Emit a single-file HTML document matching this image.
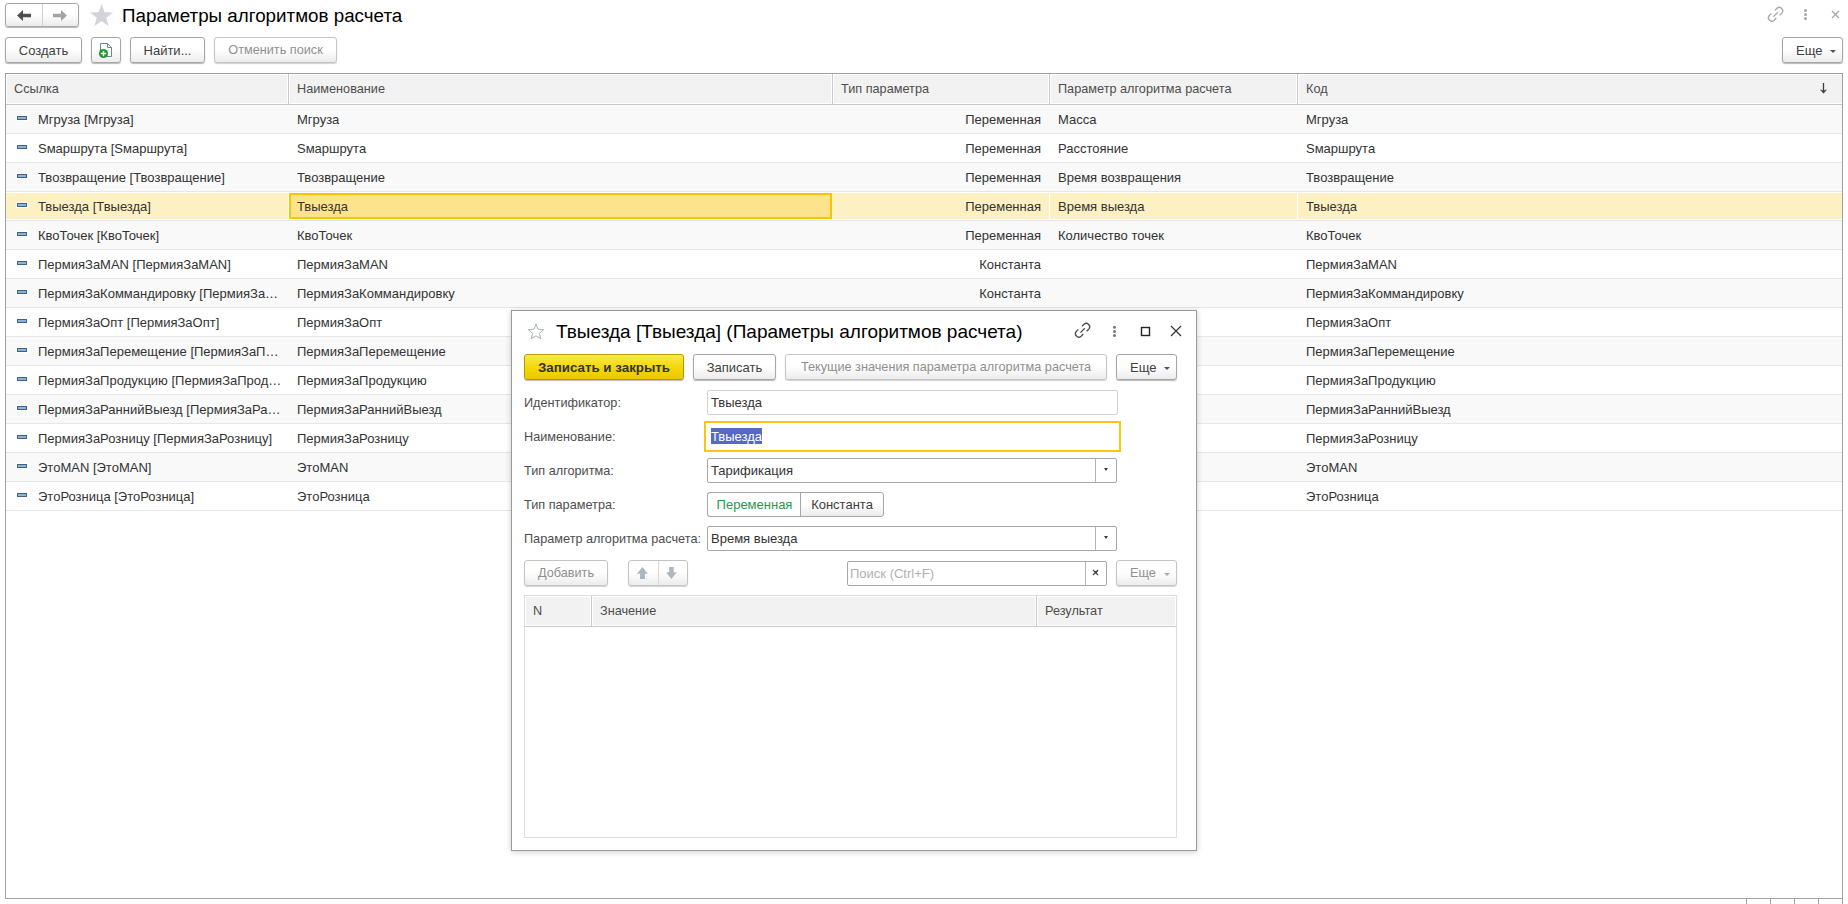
<!DOCTYPE html>
<html><head><meta charset="utf-8">
<style>
*{box-sizing:border-box;margin:0;padding:0}
html,body{width:1848px;height:904px;overflow:hidden;background:#fff}
body{font-family:"Liberation Sans",sans-serif;font-size:13px;color:#333;position:relative}
.a{position:absolute}
svg{position:absolute;overflow:visible}
.btn{position:absolute;border:1px solid #a6a6a6;border-radius:3px;background:linear-gradient(#fff 0%,#fff 45%,#ececec 100%);box-shadow:0 1px 1px rgba(0,0,0,.28);color:#404040;font-size:13px;text-align:center;white-space:nowrap;line-height:25px}
.btn.dis{color:#8f8f8f;border-color:#c4c4c4;box-shadow:0 1px 1px rgba(0,0,0,.18);font-size:12.7px}
.title{position:absolute;font-size:19px;color:#000;white-space:nowrap;line-height:22px}
/* main table */
.tbl{position:absolute;left:5px;top:73px;width:1838px;height:826px;border:1px solid #a0a0a0;background:#fff;overflow:hidden}
.hdr{position:absolute;left:0;top:0;width:1836px;height:31px;background:#fff;border-bottom:1px solid #c8c8c8}
.hb{position:absolute;top:1px;height:28px;background:#f2f2f2}
.hc{position:absolute;top:0;height:30px;line-height:31px;color:#4d4d4d;white-space:nowrap;font-size:12.7px}
.hsep{position:absolute;top:0;width:1px;height:30px;background:#cbcbcb}
.row{position:absolute;left:0;width:1836px;height:29px;border-bottom:1px solid #e6e6e6}
.row.g{background:#f9f9f9}
.row.sel{background:#fff;}
.row.sel .bg{position:absolute;left:0;right:0;top:1px;bottom:1px;background:#fdf0c2}
.c{position:absolute;top:1px;height:27px;line-height:28px;white-space:nowrap;overflow:hidden;text-overflow:ellipsis;color:#333}
.ico{position:absolute;left:11px;top:11px;width:10px;height:4px;background:#88b4dc;border:1px solid #41617f;box-shadow:0 0 0 1px #fff}
.selc{position:absolute;left:283px;top:1px;width:543px;height:26px;background:#fde48c;border:2px solid #f7c600}
.vsep{position:absolute;top:1px;width:1px;height:26px;background:#fff}
/* dialog */
.dlg{position:absolute;left:511px;top:310px;width:686px;height:541px;background:#fff;border:1px solid #9a9a9a;box-shadow:0 1px 6px rgba(0,0,0,.2)}
.lbl{position:absolute;color:#4d4d4d;white-space:nowrap;line-height:16px;font-size:12.7px}
.inp{position:absolute;border:1px solid #d2d2d2;border-radius:2px;background:#fff;color:#333;white-space:nowrap;line-height:24px;padding-left:3px}
.inp.dd{border-color:#a8a8a8}
.ddb{position:absolute;top:0;right:0;width:21px;height:100%;border-left:1px solid #b4b4b4}
.ddb:after{content:"";position:absolute;left:7.5px;top:9px;border-left:2.5px solid transparent;border-right:2.5px solid transparent;border-top:3px solid #3a3a3a}
.arr{position:absolute;border-left:3px solid transparent;border-right:3px solid transparent;border-top:3px solid #555}
</style></head>
<body>
<!-- top nav -->
<div class="btn" style="left:5px;top:3px;width:74px;height:24px"></div>
<div class="a" style="left:42px;top:4px;width:1px;height:22px;background:#d0d0d0"></div>
<svg style="left:0;top:0" width="1" height="1"><path d="M17 15.5 L23 10 L23 13.8 L31 13.8 L31 17.2 L23 17.2 L23 21 Z" fill="#4f4f4f"/><path d="M67 15.5 L61 10 L61 13.8 L53 13.8 L53 17.2 L61 17.2 L61 21 Z" fill="#a3a3a3"/>
<path d="M101.50 4.10 L104.44 12.15 L113.01 12.46 L106.26 17.75 L108.61 25.99 L101.50 21.20 L94.39 25.99 L96.74 17.75 L89.99 12.46 L98.56 12.15 Z" fill="#d1d4d8"/></svg>
<div class="title" style="left:122px;top:5px;font-size:18.8px">Параметры алгоритмов расчета</div>
<svg style="left:0;top:0" width="1" height="1">
 <g fill="none" stroke="#a6a6a6" stroke-width="1.3" transform="translate(693,-316)"><path d="M1078.3 329.4 L1076.3 331.4 A3.4 3.4 0 0 0 1081.1 336.2 L1083.3 334"/><path d="M1081.9 326.4 L1084 324.3 A3.4 3.4 0 0 1 1088.8 329.1 L1086.6 331.3"/><path d="M1080.4 332.6 L1084.8 328.2"/></g>
 <g fill="#a6a6a6"><circle cx="1805.5" cy="10.4" r="1.5"/><circle cx="1805.5" cy="14.5" r="1.5"/><circle cx="1805.5" cy="18.6" r="1.5"/></g>
 <g stroke="#a6a6a6" stroke-width="1.2"><path d="M1832 11 L1839 18 M1839 11 L1832 18"/></g>
</svg>
<!-- toolbar -->
<div class="btn" style="left:5px;top:37px;width:77px;height:26px">Создать</div>
<div class="btn" style="left:91px;top:37px;width:30px;height:26px"></div>
<svg style="left:0;top:0" width="1" height="1">
 <path d="M100.5 43.5 H107.5 L111.5 47.5 V56.5 H100.5 Z" fill="#fff" stroke="#70839a" stroke-width="1" stroke-linejoin="miter"/>
 <path d="M107.5 43.5 V47.5 H111.5" fill="none" stroke="#70839a" stroke-width="1"/>
 <circle cx="103.5" cy="53.5" r="4.5" fill="#139a26"/>
 <path d="M103.5 50.8 V56.2 M100.8 53.5 H106.2" stroke="#fff" stroke-width="1.5"/>
</svg>
<div class="btn" style="left:130px;top:37px;width:75px;height:26px">Найти...</div>
<div class="btn dis" style="left:214px;top:37px;width:123px;height:26px">Отменить поиск</div>
<div class="btn" style="left:1782px;top:37px;width:61px;height:26px;text-align:left;padding-left:13px;line-height:25px">Еще</div>
<div class="arr" style="left:1830px;top:50px"></div>

<div class="tbl">
 <div class="hdr">
  <div class="hb" style="left:1px;width:280px"></div>
  <div class="hb" style="left:284px;width:541px"></div>
  <div class="hb" style="left:828px;width:214px"></div>
  <div class="hb" style="left:1045px;width:245px"></div>
  <div class="hb" style="left:1293px;width:543px"></div>
  <div class="hsep" style="left:282px"></div>
  <div class="hsep" style="left:826px"></div>
  <div class="hsep" style="left:1043px"></div>
  <div class="hsep" style="left:1291px"></div>
  <div class="hc" style="left:8px">Ссылка</div>
  <div class="hc" style="left:291px">Наименование</div>
  <div class="hc" style="left:835px">Тип параметра</div>
  <div class="hc" style="left:1052px">Параметр алгоритма расчета</div>
  <div class="hc" style="left:1300px">Код</div>
  <svg style="left:0;top:0" width="1" height="1"><path d="M1817.5 9 V17" stroke="#3c3c3c" stroke-width="1.3"/><path d="M1814.6 15.8 L1817.5 17 L1820.4 15.8 L1817.5 19.3 Z" fill="#3c3c3c" stroke="#3c3c3c" stroke-width="0.6" stroke-linejoin="round"/></svg>
 </div>
<div class="row g" style="top:31px"><div class="ico"></div><div class="c" style="left:32px;width:246px">Мгруза [Мгруза]</div><div class="c" style="left:291px;width:530px">Мгруза</div><div class="c" style="left:834px;width:201px;text-align:right">Переменная</div><div class="c" style="left:1052px;width:240px">Масса</div><div class="c" style="left:1300px;width:530px">Мгруза</div></div>
<div class="row" style="top:60px"><div class="ico"></div><div class="c" style="left:32px;width:246px">Sмаршрута [Sмаршрута]</div><div class="c" style="left:291px;width:530px">Sмаршрута</div><div class="c" style="left:834px;width:201px;text-align:right">Переменная</div><div class="c" style="left:1052px;width:240px">Расстояние</div><div class="c" style="left:1300px;width:530px">Sмаршрута</div></div>
<div class="row g" style="top:89px"><div class="ico"></div><div class="c" style="left:32px;width:246px">Твозвращение [Твозвращение]</div><div class="c" style="left:291px;width:530px">Твозвращение</div><div class="c" style="left:834px;width:201px;text-align:right">Переменная</div><div class="c" style="left:1052px;width:240px">Время возвращения</div><div class="c" style="left:1300px;width:530px">Твозвращение</div></div>
<div class="row sel" style="top:118px"><div class="bg"></div><div class="vsep" style="left:282px"></div><div class="vsep" style="left:1043px"></div><div class="vsep" style="left:1291px"></div><div class="ico"></div><div class="c" style="left:32px;width:246px">Твыезда [Твыезда]</div><div class="selc"></div><div class="c" style="left:291px;width:530px">Твыезда</div><div class="c" style="left:834px;width:201px;text-align:right">Переменная</div><div class="c" style="left:1052px;width:240px">Время выезда</div><div class="c" style="left:1300px;width:530px">Твыезда</div></div>
<div class="row g" style="top:147px"><div class="ico"></div><div class="c" style="left:32px;width:246px">КвоТочек [КвоТочек]</div><div class="c" style="left:291px;width:530px">КвоТочек</div><div class="c" style="left:834px;width:201px;text-align:right">Переменная</div><div class="c" style="left:1052px;width:240px">Количество точек</div><div class="c" style="left:1300px;width:530px">КвоТочек</div></div>
<div class="row" style="top:176px"><div class="ico"></div><div class="c" style="left:32px;width:246px">ПермияЗаMAN [ПермияЗаMAN]</div><div class="c" style="left:291px;width:530px">ПермияЗаMAN</div><div class="c" style="left:834px;width:201px;text-align:right">Константа</div><div class="c" style="left:1052px;width:240px"></div><div class="c" style="left:1300px;width:530px">ПермияЗаMAN</div></div>
<div class="row g" style="top:205px"><div class="ico"></div><div class="c" style="left:32px;width:246px">ПермияЗаКоммандировку [ПермияЗаКоммандировку]</div><div class="c" style="left:291px;width:530px">ПермияЗаКоммандировку</div><div class="c" style="left:834px;width:201px;text-align:right">Константа</div><div class="c" style="left:1052px;width:240px"></div><div class="c" style="left:1300px;width:530px">ПермияЗаКоммандировку</div></div>
<div class="row" style="top:234px"><div class="ico"></div><div class="c" style="left:32px;width:246px">ПермияЗаОпт [ПермияЗаОпт]</div><div class="c" style="left:291px;width:530px">ПермияЗаОпт</div><div class="c" style="left:834px;width:201px;text-align:right">Константа</div><div class="c" style="left:1052px;width:240px"></div><div class="c" style="left:1300px;width:530px">ПермияЗаОпт</div></div>
<div class="row g" style="top:263px"><div class="ico"></div><div class="c" style="left:32px;width:246px">ПермияЗаПеремещение [ПермияЗаПеремещение]</div><div class="c" style="left:291px;width:530px">ПермияЗаПеремещение</div><div class="c" style="left:834px;width:201px;text-align:right">Константа</div><div class="c" style="left:1052px;width:240px"></div><div class="c" style="left:1300px;width:530px">ПермияЗаПеремещение</div></div>
<div class="row" style="top:292px"><div class="ico"></div><div class="c" style="left:32px;width:246px">ПермияЗаПродукцию [ПермияЗаПродукцию]</div><div class="c" style="left:291px;width:530px">ПермияЗаПродукцию</div><div class="c" style="left:834px;width:201px;text-align:right">Константа</div><div class="c" style="left:1052px;width:240px"></div><div class="c" style="left:1300px;width:530px">ПермияЗаПродукцию</div></div>
<div class="row g" style="top:321px"><div class="ico"></div><div class="c" style="left:32px;width:246px">ПермияЗаРаннийВыезд [ПермияЗаРаннийВыезд]</div><div class="c" style="left:291px;width:530px">ПермияЗаРаннийВыезд</div><div class="c" style="left:834px;width:201px;text-align:right">Константа</div><div class="c" style="left:1052px;width:240px"></div><div class="c" style="left:1300px;width:530px">ПермияЗаРаннийВыезд</div></div>
<div class="row" style="top:350px"><div class="ico"></div><div class="c" style="left:32px;width:246px">ПермияЗаРозницу [ПермияЗаРозницу]</div><div class="c" style="left:291px;width:530px">ПермияЗаРозницу</div><div class="c" style="left:834px;width:201px;text-align:right">Константа</div><div class="c" style="left:1052px;width:240px"></div><div class="c" style="left:1300px;width:530px">ПермияЗаРозницу</div></div>
<div class="row g" style="top:379px"><div class="ico"></div><div class="c" style="left:32px;width:246px">ЭтоMAN [ЭтоMAN]</div><div class="c" style="left:291px;width:530px">ЭтоMAN</div><div class="c" style="left:834px;width:201px;text-align:right">Константа</div><div class="c" style="left:1052px;width:240px"></div><div class="c" style="left:1300px;width:530px">ЭтоMAN</div></div>
<div class="row" style="top:408px"><div class="ico"></div><div class="c" style="left:32px;width:246px">ЭтоРозница [ЭтоРозница]</div><div class="c" style="left:291px;width:530px">ЭтоРозница</div><div class="c" style="left:834px;width:201px;text-align:right">Константа</div><div class="c" style="left:1052px;width:240px"></div><div class="c" style="left:1300px;width:530px">ЭтоРозница</div></div>
</div>
<!-- bottom scroll buttons -->
<div class="a" style="left:1746px;top:898px;width:97px;height:10px;border:1px solid #a0a0a0;background:#fff"></div>
<div class="a" style="left:1770px;top:898px;width:1px;height:10px;background:#a0a0a0"></div>
<div class="a" style="left:1794px;top:898px;width:1px;height:10px;background:#a0a0a0"></div>
<div class="a" style="left:1818px;top:898px;width:1px;height:10px;background:#a0a0a0"></div>

<!-- dialog -->
<div class="dlg">
</div>
<svg style="left:0;top:0" width="1" height="1">
 <path d="M536.00 324.10 L538.12 329.29 L543.70 329.70 L539.42 333.31 L540.76 338.75 L536.00 335.80 L531.24 338.75 L532.58 333.31 L528.30 329.70 L533.88 329.29 Z" fill="none" stroke="#a9adb2" stroke-width="1" stroke-linejoin="round"/>
</svg>
<div class="title" style="left:556px;top:321px">Твыезда [Твыезда] (Параметры алгоритмов расчета)</div>
<svg style="left:0;top:0" width="1" height="1">
 <g fill="none" stroke="#4a4a4a" stroke-width="1.3"><path d="M1078.3 329.4 L1076.3 331.4 A3.4 3.4 0 0 0 1081.1 336.2 L1083.3 334"/><path d="M1081.9 326.4 L1084 324.3 A3.4 3.4 0 0 1 1088.8 329.1 L1086.6 331.3"/><path d="M1080.4 332.6 L1084.8 328.2"/></g>
 <g fill="#777"><circle cx="1114.5" cy="327.3" r="1.5"/><circle cx="1114.5" cy="331.4" r="1.5"/><circle cx="1114.5" cy="335.6" r="1.5"/></g>
 <rect x="1141.5" y="327.5" width="8" height="8" fill="none" stroke="#222" stroke-width="1.4"/>
 <path d="M1171 326 L1181 336 M1181 326 L1171 336" stroke="#333" stroke-width="1.2"/>
</svg>
<!-- dialog toolbar -->
<div class="btn" style="left:524px;top:354px;width:160px;height:26px;background:linear-gradient(#fbe84a,#f2d500 60%,#ecc800);border-color:#b99b00;color:#333;font-weight:bold;font-size:13.33px">Записать и закрыть</div>
<div class="btn" style="left:693px;top:354px;width:83px;height:26px">Записать</div>
<div class="btn dis" style="left:785px;top:354px;width:322px;height:26px">Текущие значения параметра алгоритма расчета</div>
<div class="btn" style="left:1116px;top:354px;width:61px;height:26px;text-align:left;padding-left:13px">Еще</div>
<div class="arr" style="left:1164px;top:367px"></div>

<div class="lbl" style="left:524px;top:395px">Идентификатор:</div>
<div class="inp" style="left:707px;top:390px;width:411px;height:25px">Твыезда</div>
<div class="lbl" style="left:524px;top:429px">Наименование:</div>
<div class="a" style="left:704px;top:421px;width:417px;height:31px;border:2px solid #f7c712"></div>
<div class="a" style="left:711px;top:428px;width:51px;height:16px;background:#5468c4"></div>
<div class="a" style="left:711px;top:429px;color:#fff;line-height:16px">Твыезда</div>
<div class="lbl" style="left:524px;top:463px">Тип алгоритма:</div>
<div class="inp dd" style="left:707px;top:458px;width:410px;height:25px">Тарификация<div class="ddb"></div></div>
<div class="lbl" style="left:524px;top:497px">Тип параметра:</div>
<div class="a" style="left:707px;top:492px;width:94px;height:25px;border:1px solid #a8a8a8;border-right:none;border-radius:3px 0 0 3px;background:#fff;color:#1e9b50;text-align:center;line-height:23px">Переменная</div>
<div class="btn" style="left:800px;top:492px;width:84px;height:25px;border-radius:0 3px 3px 0;box-shadow:none;line-height:23px">Константа</div>
<div class="lbl" style="left:524px;top:531px">Параметр алгоритма расчета:</div>
<div class="inp dd" style="left:707px;top:526px;width:410px;height:25px">Время выезда<div class="ddb"></div></div>

<div class="btn dis" style="left:524px;top:560px;width:84px;height:26px">Добавить</div>
<div class="btn dis" style="left:628px;top:560px;width:60px;height:26px"></div>
<div class="a" style="left:658px;top:561px;width:1px;height:24px;background:#d8d8d8"></div>
<svg style="left:0;top:0" width="1" height="1">
 <path d="M642.4 567 L647.8 573.8 L645 573.8 L645 579 L640 579 L640 573.8 L637 573.8 Z" fill="#adb7bf"/>
 <path d="M671.4 579 L676.8 572.3 L673.7 572.3 L673.7 567 L669.2 567 L669.2 572.3 L666 572.3 Z" fill="#adb7bf"/>
</svg>
<div class="inp dd" style="left:847px;top:561px;width:260px;height:25px;color:#b0b0b0;padding-left:2px">Поиск (Ctrl+F)<div class="ddb" style="width:21px"></div></div>
<svg style="left:0;top:0" width="1" height="1"><path d="M1093 570 L1098 575 M1098 570 L1093 575" stroke="#444" stroke-width="1.1"/></svg>
<div class="btn dis" style="left:1116px;top:560px;width:61px;height:26px;text-align:left;padding-left:13px">Еще</div>
<div class="arr" style="left:1164px;top:573px;border-top-color:#aaa"></div>

<div class="a" style="left:524px;top:595px;width:653px;height:243px;border:1px solid #dedede;background:#fff">
 <div class="a" style="left:0;top:0;width:651px;height:31px;background:#fff;border-bottom:1px solid #c8c8c8"></div>
 <div class="hb" style="left:1px;width:64px"></div>
 <div class="hb" style="left:68px;width:442px"></div>
 <div class="hb" style="left:513px;width:137px"></div>
 <div class="hsep" style="left:66px"></div>
 <div class="hsep" style="left:511px"></div>
 <div class="hc" style="left:8px">N</div>
 <div class="hc" style="left:75px">Значение</div>
 <div class="hc" style="left:520px">Результат</div>
</div>
</body></html>
